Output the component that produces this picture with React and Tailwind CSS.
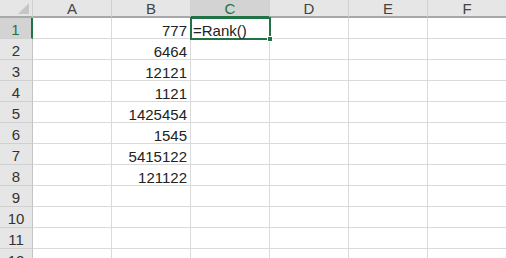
import React from "react";

const cols = ["A", "B", "C", "D", "E", "F"];
const data = {
  1: "777",
  2: "6464",
  3: "12121",
  4: "1121",
  5: "1425454",
  6: "1545",
  7: "5415122",
  8: "121122",
};
const rows = Array.from({ length: 12 }, (_, i) => i + 1);

export default function App() {
  return (
    <div
      className="w-[506px] h-[258px] overflow-hidden bg-white relative"
      style={{ fontFamily: '"Liberation Sans", Arial, sans-serif' }}
    >
      <div className="grid grid-cols-[33px_79px_79px_79px_79px_79px_79px] w-[507px]">
        {/* header row */}
        <div className="h-[18px] bg-[#e6e6e6] border-r border-b-2 border-r-[#d0d0d0] border-b-[#a8a8a8] relative overflow-hidden">
          <div className="absolute right-[3px] bottom-[2px] w-0 h-0 border-l-[11px] border-l-transparent border-b-[11px] border-b-[#c6c6c6]"></div>
        </div>
        {cols.map((c) => (
          <div
            key={c}
            className={
              "h-[18px] flex items-center justify-center pt-[1px] text-[15px] leading-[15px] border-r border-b-2 border-r-[#d0d0d0] " +
              (c === "C"
                ? "bg-[#d3d3d3] text-[#217346] border-b-[#217346]"
                : "bg-[#e6e6e6] text-[#444444] border-b-[#a8a8a8]")
            }
          >
            {c}
          </div>
        ))}
        {rows.map((r) => (
          <React.Fragment key={r}>
            <div
              className={
                "h-[21px] flex items-end justify-center text-[15px] leading-[16px] border-b border-b-[#d0d0d0] " +
                (r === 1
                  ? "bg-[#d3d3d3] text-[#217346] border-r-2 border-r-[#217346]"
                  : "bg-[#e6e6e6] text-[#333333] border-r border-r-[#c4c4c4]")
              }
            >
              {r}
            </div>
            {cols.map((c) => (
              <div
                key={c}
                className="h-[21px] flex items-end justify-end pr-[3px] text-[15px] leading-[14px] text-[#222222] border-r border-b border-[#dadada]"
              >
                {c === "B" ? data[r] : ""}
              </div>
            ))}
          </React.Fragment>
        ))}
      </div>
      {/* active cell C1 */}
      <div className="absolute left-[190px] top-[17px] w-[81px] h-[23px] border-2 border-[#217346] flex items-end pl-[1px] text-[15px] leading-[14px] text-[#222222]">
        =Rank()
        <div className="absolute right-[-4px] bottom-[-4px] w-[6px] h-[6px] bg-[#217346] border border-white"></div>
      </div>
    </div>
  );
}
